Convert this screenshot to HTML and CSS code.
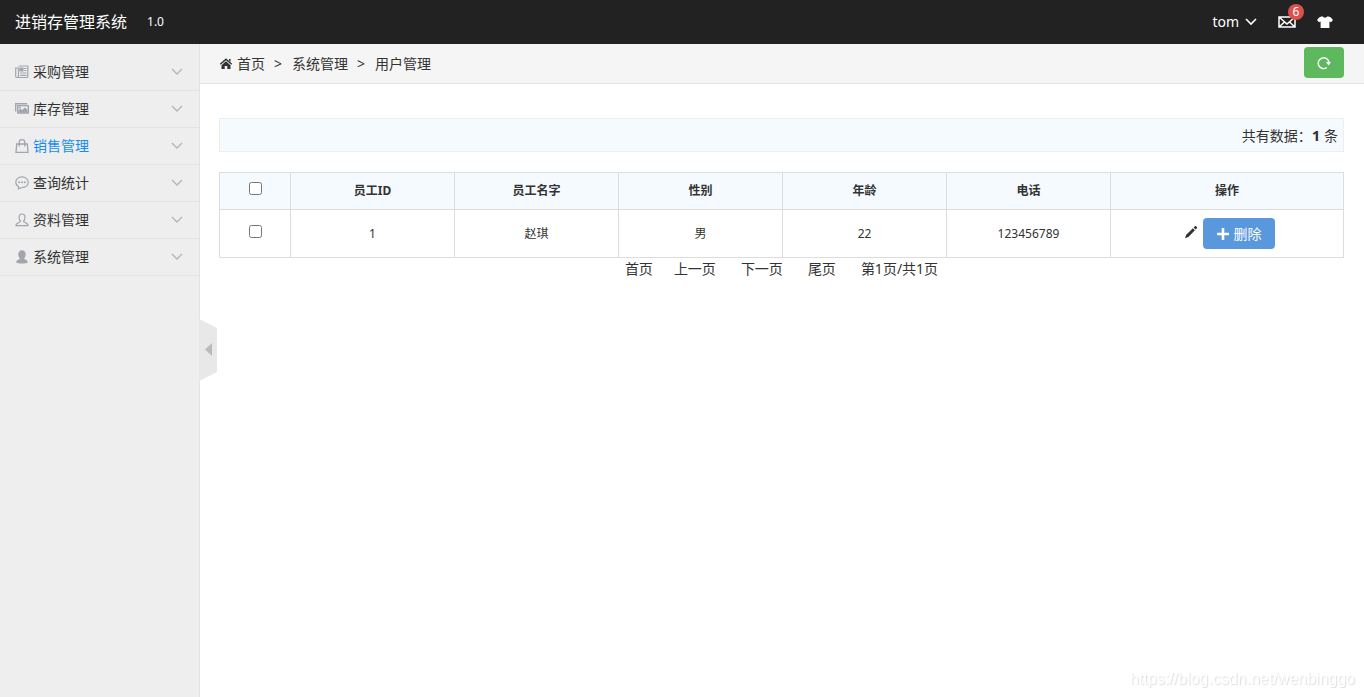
FILE: index.html
```html
<!DOCTYPE html>
<html lang="zh-CN">
<head>
<meta charset="utf-8">
<title>进销存管理系统</title>
<link rel="stylesheet" href="styles.css">
</head>
<body>
<header class="navbar">
  <a class="logo" href="#">进销存管理系统</a>
  <span class="version">1.0</span>
  <nav class="user-nav">
    <a class="user" href="#">tom
      <svg class="caret" width="12" height="8" viewBox="0 0 12 8"><path d="M1 1l5 5 5-5" fill="none" stroke="currentColor" stroke-width="1.6"/></svg>
    </a>
    <a class="message" href="#" aria-label="消息">
      <svg width="18" height="12" viewBox="0 0 18 12" fill="none" stroke="currentColor" stroke-width="1.500"><path d="M1 1h16v10H1zM1 1l8 7 8-7M1 11l5.500-5M17 11l-5.500-5"/></svg>
      <span class="badge">6</span>
    </a>
    <a class="skin" href="#" aria-label="换肤">
      <svg width="16" height="12" viewBox="0 0 16 12"><path d="M5.200 .3Q8 3 10.800 .3l2.800.9L16 4l-2 2.300-1.600-.9V12H3.600V5.400L2 6.300 0 4l2.400-2.800z" fill="currentColor"/></svg>
    </a>
  </nav>
</header>
<div class="layout">
  <aside class="sidebar">
    <ul class="menu">
      <li><a href="#">
        <svg class="icon" width="14" height="14" viewBox="0 0 14 14" fill="none" stroke="currentColor" stroke-width="1.200"><path d="M3.500 1h9.300v10.500q0 1-1 1H2Q.7 12.500.7 11.500V3h2.800v8.500q0 1-1.300 1M9 3.500h2.500M9 5.500h2.500M5 8h6.500M5 10.300h6.500"/><path d="M5 3h3v3H5z" fill="currentColor"/></svg>
        <span>采购管理</span><svg class="arrow" width="12" height="8" viewBox="0 0 12 8"><path d="M1 1l5 5 5-5"/></svg></a></li>
      <li><a href="#">
        <svg class="icon" width="14" height="14" viewBox="0 0 14 14" fill="none" stroke="currentColor" stroke-width="1.400"><path d="M2.800 3.600h10.500v7.500H2.800zM.7 9.500V1.700h11.500"/><path d="M3.500 10.800V8.500l2-2 1.500 1.500L10 5.500l2.600 2.500v2.800z" fill="currentColor" stroke="none"/><circle cx="4.900" cy="5.500" r="1" fill="currentColor" stroke="none"/></svg>
        <span>库存管理</span><svg class="arrow" width="12" height="8" viewBox="0 0 12 8"><path d="M1 1l5 5 5-5"/></svg></a></li>
      <li class="active"><a href="#">
        <svg class="icon" width="14" height="14" viewBox="0 0 14 14" fill="none" stroke="currentColor" stroke-width="1.300"><path d="M1.700 5h10.600l.7 8.300H1zM4.200 7.500V3.500a2.800 2.800 0 0 1 5.600 0v4"/></svg>
        <span>销售管理</span><svg class="arrow" width="12" height="8" viewBox="0 0 12 8"><path d="M1 1l5 5 5-5"/></svg></a></li>
      <li><a href="#">
        <svg class="icon" width="14" height="14" viewBox="0 0 14 14"><path d="M3.500 10.700C1.700 9.700.8 8 .8 6.300.8 3.200 3.500.8 7 .8s6.200 2.400 6.200 5.500S10.500 11.500 7 11.500L3.500 12.800z" fill="none" stroke="currentColor" stroke-width="1.200"/><g fill="currentColor"><circle cx="4.200" cy="6.300" r="1"/><circle cx="7" cy="6.300" r="1"/><circle cx="9.800" cy="6.300" r="1"/></g></svg>
        <span>查询统计</span><svg class="arrow" width="12" height="8" viewBox="0 0 12 8"><path d="M1 1l5 5 5-5"/></svg></a></li>
      <li><a href="#">
        <svg class="icon" width="14" height="14" viewBox="0 0 14 14"><path d="M5.500 8.300C4.300 7.300 4 5.700 4 4.300 4 2.300 5.200 1 7 1s3 1.300 3 3.300c0 1.400-.3 3-1.500 4 .3 1.500 4.500 1 4.500 4.400H1c0-3.400 4.200-2.900 4.500-4.400z" fill="none" stroke="currentColor" stroke-width="1.200"/></svg>
        <span>资料管理</span><svg class="arrow" width="12" height="8" viewBox="0 0 12 8"><path d="M1 1l5 5 5-5"/></svg></a></li>
      <li><a href="#">
        <svg class="icon" width="14" height="14" viewBox="0 0 14 14"><path d="M5 8.500C3.800 7.500 3.300 5.700 3.300 4.200 3.300 2 4.800.3 7 .3s3.700 1.700 3.700 3.900c0 1.500-.5 3.300-1.700 4.300.5 1.300 3.600.8 3.800 4-2.500 1.300-9.100 1.300-11.600 0 .2-3.200 3.300-2.700 3.800-4z" fill="currentColor"/></svg>
        <span>系统管理</span><svg class="arrow" width="12" height="8" viewBox="0 0 12 8"><path d="M1 1l5 5 5-5"/></svg></a></li>
    </ul>
    <button class="toggle" type="button" aria-label="收起菜单">
      <svg width="18" height="62" viewBox="0 0 18 62"><path d="M0 0l18 9v44L0 62z" fill="#e8e8e8"/><path d="M13 24v13l-7-6.500z" fill="#bbb"/></svg>
    </button>
  </aside>
  <main class="main">
    <nav class="breadcrumb">
      <svg width="14" height="12" viewBox="0 0 14 12" fill="#333"><path d="M7 .3l6.200 5.500-.9 1L7 2.200 1.700 6.800l-.9-1zM10 1h1.600v2.800L10 2.400z"/><path d="M7 3.300l4.500 4V11H8.300V8H5.700v3H2.500V7.300z"/></svg>
      <a href="#">首页</a><span class="sep">&gt;</span><span>系统管理</span><span class="sep">&gt;</span><span>用户管理</span>
      <button class="refresh" type="button" aria-label="刷新">
        <svg width="14" height="14" viewBox="0 0 14 14"><path d="M9.800 11.600A5.400 5.400 0 1 1 12 6.500" fill="none" stroke="#fff" stroke-width="1.400"/><path d="M9 6h5l-2.400 3.500z" fill="#fff"/></svg>
      </button>
    </nav>
    <section class="content">
      <div class="toolbar"><span>共有数据：<strong>1</strong> 条</span></div>
      <table class="table">
        <colgroup><col class="col-check"><col class="col-data"><col class="col-data"><col class="col-data"><col class="col-data"><col class="col-data"><col class="col-ops"></colgroup>
        <thead>
          <tr><th><input type="checkbox" aria-label="全选"></th><th>员工ID</th><th>员工名字</th><th>性别</th><th>年龄</th><th>电话</th><th>操作</th></tr>
        </thead>
        <tbody>
          <tr><td><input type="checkbox" aria-label="选择 赵琪"></td><td>1</td><td>赵琪</td><td>男</td><td>22</td><td>123456789</td>
            <td><div class="ops">
              <a class="edit" href="#" aria-label="编辑"><svg width="14" height="14" viewBox="0 0 14 14" fill="#333"><path d="M1 13.300l1.200-3.500L8.900 3.300l2 2-6.500 6.600zM9.600 2.600l1.300-1.300q.7-.5 1.300 0l.7.700q.5.600 0 1.300l-1.300 1.300z"/></svg></a>
              <button class="delete" type="button"><svg width="12" height="12" viewBox="0 0 12 12"><path d="M6 0v12M0 6h12" stroke="#fff" stroke-width="2.600"/></svg>删除</button>
            </div></td></tr>
        </tbody>
      </table>
      <div class="pager"><a href="#">首页</a><a href="#">上一页</a><a href="#">下一页</a><a href="#">尾页</a><span>第1页/共1页</span></div>
    </section>
  </main>
</div>
<div class="watermark">https://blog.csdn.net/wenbinggo</div>
</body>
</html>
```
FILE: styles.css
```css
* { box-sizing: border-box; }
body {
  margin: 0;
  min-height: 100vh;
  display: flex;
  flex-direction: column;
  font: 14px/20px "Noto Sans", "Noto Sans CJK SC", sans-serif;
  color: #333;
  background: #fff;
}
a { color: inherit; text-decoration: none; }
button { font: inherit; border: 0; padding: 0; cursor: pointer; }
svg { display: block; flex: none; }

.navbar {
  display: flex;
  align-items: center;
  height: 44px;
  padding: 0 31px 0 15px;
  background: #222;
  color: #fff;
}
.logo { font-size: 16px; }
.version { margin-left: 20px; font-size: 12px; }
.user-nav { display: flex; align-items: center; gap: 21px; margin-left: auto; }
.user { display: flex; align-items: center; gap: 6px; }
.message { position: relative; }
.badge {
  position: absolute;
  top: -12px;
  right: -8px;
  width: 16px;
  height: 16px;
  border-radius: 50%;
  background: #dd514c;
  font-size: 12px;
  line-height: 16px;
  text-align: center;
}

.layout { display: flex; flex: 1; }
.sidebar {
  position: relative;
  flex: none;
  width: 200px;
  padding-top: 10px;
  background: #eee;
  border-right: 1px solid #e3e3e3;
}
.menu { margin: 0; padding: 0; list-style: none; }
.menu li { border-bottom: 1px solid #e3e3e3; }
.menu a {
  display: flex;
  align-items: center;
  height: 36px;
  padding: 0 16px 0 15px;
}
.icon { color: #a0a5ae; margin-right: 4px; }
.arrow { margin-left: auto; fill: none; stroke: #b5b5b5; stroke-width: 1.4; }
.active span { color: #148cf1; }
.toggle {
  position: absolute;
  left: 100%;
  top: 275px;
  background: none;
}

.main { flex: 1; min-width: 0; }
.breadcrumb {
  display: flex;
  align-items: center;
  height: 40px;
  padding: 0 20px 0 19px;
  background: #f5f5f5;
  border-bottom: 1px solid #e3e3e3;
}
.breadcrumb a { margin-left: 4px; }
.sep { margin: 0 10px 0 9px; }
.refresh {
  display: flex;
  align-items: center;
  justify-content: center;
  width: 40px;
  height: 31px;
  margin-left: auto;
  margin-bottom: 2px;
  border-radius: 4px;
  background: #5eb95e;
}

.content { padding: 34px 20px 20px 19px; }
.toolbar {
  display: flex;
  justify-content: flex-end;
  align-items: center;
  height: 34px;
  padding: 0 5px;
  margin-bottom: 20px;
  background: #f5fafe;
  border: 1px solid #eee;
}
.toolbar strong { font-size: 15px; }
.table {
  width: 100%;
  table-layout: fixed;
  border-collapse: collapse;
  font-size: 12px;
  text-align: center;
}
.col-check { width: 71px; }
.col-data { width: 164px; }
.table th, .table td { padding: 8px; border: 1px solid #ddd; }
.table th { background: #f5fafe; }
.table input { display: block; width: 13px; height: 13px; margin: 0 auto 5px; }
.ops { display: flex; align-items: center; justify-content: center; gap: 5px; padding-left: 5px; }
.edit { margin-bottom: 4px; }
.delete {
  display: flex;
  align-items: center;
  justify-content: center;
  gap: 5px;
  width: 72px;
  height: 31px;
  border-radius: 4px;
  background: #5a98de;
  color: #fff;
  font-size: 14px;
}
.pager { display: flex; justify-content: center; gap: 25px; padding-top: 1px; }
.pager a:first-child { margin-right: -4px; }

.watermark {
  position: fixed;
  right: 9px;
  bottom: 8px;
  font: 16px/20px "Liberation Sans", sans-serif;
  color: #fff;
  text-shadow: 1px 1px 1px #ddd;
}
```
